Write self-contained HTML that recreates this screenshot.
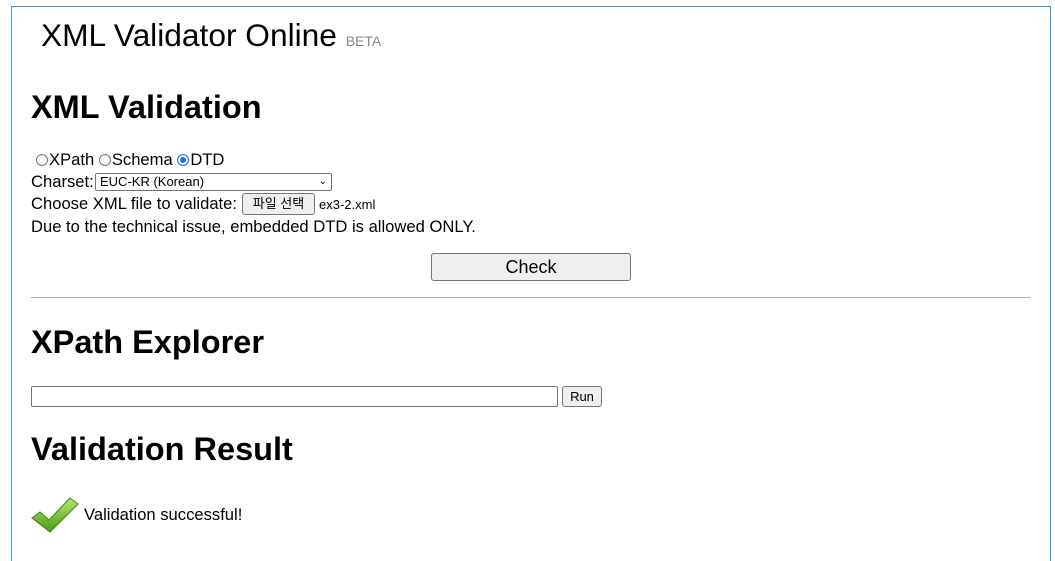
<!DOCTYPE html>
<html><head><meta charset="utf-8"><style>
html,body{margin:0;width:1055px;height:561px;overflow:hidden}
body{background:#fff;position:relative;font-family:"Liberation Sans","Noto Sans CJK KR",sans-serif;color:#000}
.a{position:absolute;white-space:nowrap}
.frame{position:absolute;left:11px;top:6px;width:1038px;height:555px;border:1px solid #3a9cc8;border-bottom:none}
h2{position:absolute;margin:0;font-size:32.5px;font-weight:bold;white-space:nowrap;line-height:1}
.t{font-size:16.6px}
.btn{position:absolute;background:#efefef;border:1px solid #767676;border-radius:3px;box-sizing:border-box;text-align:center}
.radio{display:inline-block;width:12px;height:12px;border:1px solid #767676;border-radius:50%;box-sizing:border-box;vertical-align:-1px;margin:0 1px 0 0}
</style></head><body>
<div class="frame"></div>
<div class="a" style="left:41px;top:17px;font-size:31.7px">XML Validator Online <span style="font-size:14px;color:#888">BETA</span></div>
<h2 style="left:31px;top:91px">XML Validation</h2>
<div class="a t" style="left:36px;top:150px"><span class="radio"></span>XPath <span class="radio"></span>Schema <span class="radio" style="border:1px solid #1a73e8;box-shadow:inset 0 0 0 2px #fff;background:#1a73e8"></span>DTD</div>
<div class="a t" style="left:31px;top:172px">Charset:</div>
<div class="a" style="left:95px;top:173px;width:237px;height:18px;border:1px solid #767676;border-radius:2px;box-sizing:border-box;font-size:13px;padding-left:4px;line-height:16px">EUC-KR (Korean)<span style="position:absolute;right:4px;top:0;font-size:10px">&#8964;</span></div>
<div class="a t" style="left:31px;top:194px">Choose XML file to validate:</div>
<div class="btn" style="left:242px;top:193px;width:73px;height:22px;font-size:13px;line-height:20px">파일 선택</div>
<div class="a" style="left:319px;top:197px;font-size:13px">ex3-2.xml</div>
<div class="a t" style="left:31px;top:217px">Due to the technical issue, embedded DTD is allowed ONLY.</div>
<div class="btn" style="left:431px;top:253px;width:200px;height:28px;font-size:18px;line-height:26px">Check</div>
<div class="a" style="left:31px;top:297px;width:999px;height:1px;background:#aaa"></div>
<h2 style="left:31px;top:326px">XPath Explorer</h2>
<div class="a" style="left:31px;top:386px;width:527px;height:21px;border:1px solid #767676;border-radius:2px;box-sizing:border-box"></div>
<div class="btn" style="left:562px;top:386px;width:40px;height:21px;font-size:13px;line-height:19px">Run</div>
<h2 style="left:31px;top:433px">Validation Result</h2>
<svg class="a" style="left:30px;top:496px" width="50" height="38" viewBox="0 0 50 38">
<defs><linearGradient id="g" x1="0" y1="0" x2="0" y2="1"><stop offset="0" stop-color="#b8e870"/><stop offset="1" stop-color="#4a9a10"/></linearGradient></defs>
<path d="M2 22 L10 16 L19 24 L40 2 L48 8 L20 36 Z" fill="url(#g)" stroke="#3f8010" stroke-width="1"/>
</svg>
<div class="a t" style="left:84px;top:505px">Validation successful!</div>
</body></html>
